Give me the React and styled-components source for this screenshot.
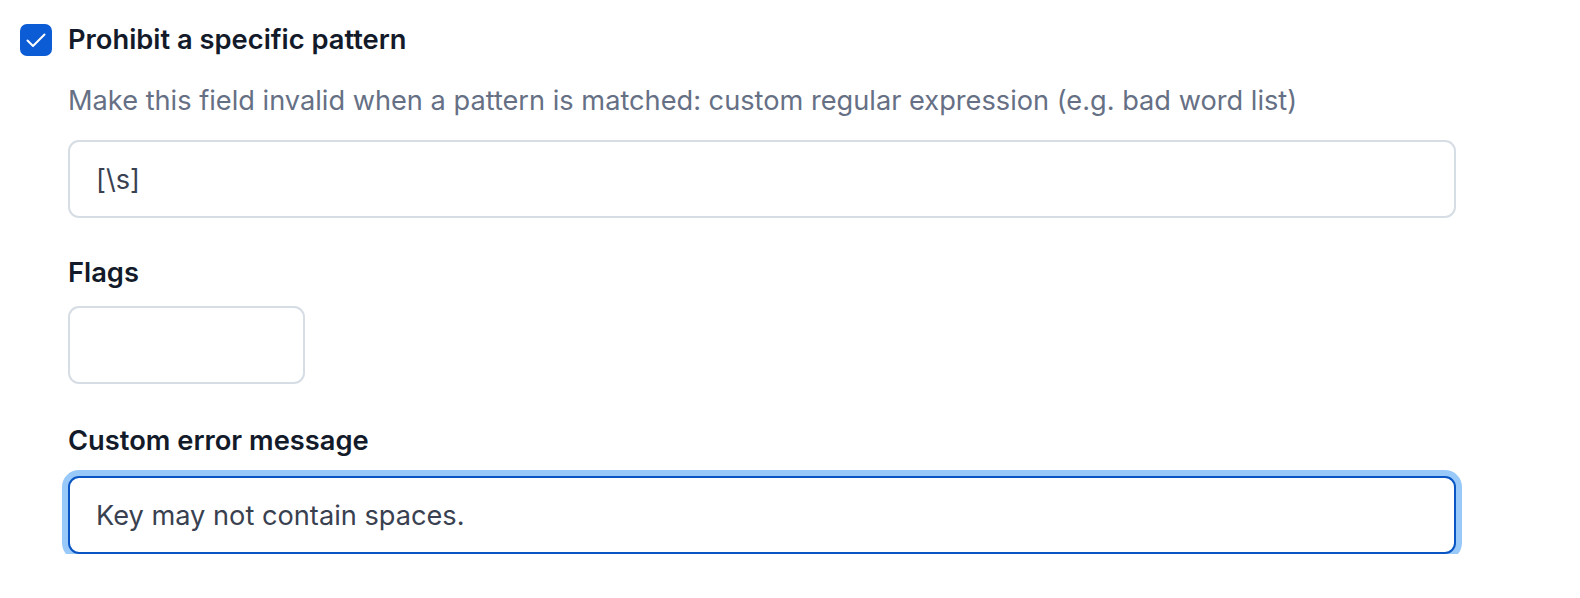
import React from "react";
import styled, { createGlobalStyle } from "styled-components";

const Global = createGlobalStyle`
  html, body { margin: 0; padding: 0; background: #ffffff; }
  body { font-family: Inter, "Noto Sans", sans-serif; }
`;

const Page = styled.div`
  padding: 24px 0 0 20px;
  width: 1436px;
`;

const CheckRow = styled.label`
  display: flex;
  align-items: center;
  gap: 16px;
  height: 32px;
`;

const Box = styled.span`
  width: 32px;
  height: 32px;
  border-radius: 7px;
  background: #0b5cd5;
  display: flex;
  align-items: center;
  justify-content: center;
  flex: none;
`;

const LabelText = styled.span`
  font-size: 27.3px;
  font-weight: 600;
  color: #131a29;
  line-height: 40px;
`;

const Body = styled.div`
  padding-left: 48px;
  display: flex;
  flex-direction: column;
`;

const Description = styled.p`
  margin: 25px 0 0;
  font-size: 27.2px;
  line-height: 40px;
  color: #667085;
  font-weight: 400;
`;

const FieldLabel = styled.div`
  margin-top: ${(p) => p.$mt}px;
  font-size: 27.3px;
  font-weight: 600;
  line-height: 40px;
  color: #131a29;
`;

const Input = styled.div`
  box-sizing: border-box;
  margin-top: ${(p) => p.$mt}px;
  width: ${(p) => p.$w || "1388px"};
  height: 78px;
  border: 2px solid ${(p) => (p.$focus ? "#0a55c4" : "#d6dde4")};
  border-radius: 11px;
  box-shadow: ${(p) => (p.$focus ? "0 0 0 6px #99c9f9" : "none")};
  background: #fff;
  display: flex;
  align-items: center;
  padding: 0 26px;
  font-size: 27.2px;
  color: #394150;
`;

function Check() {
  return (
    <svg width="32" height="32" viewBox="0 0 32 32" fill="none">
      <path d="M7.5 16.5L13 22L24.5 10.5" stroke="#fff" strokeWidth="2" strokeLinecap="round" strokeLinejoin="round" />
    </svg>
  );
}

export default function App() {
  return (
    <>
      <Global />
      <Page>
        <CheckRow>
          <Box><Check /></Box>
          <LabelText>Prohibit a specific pattern</LabelText>
        </CheckRow>
        <Body>
          <Description>
            Make this field invalid when a pattern is matched: custom regular expression (e.g. bad word list)
          </Description>
          <Input $mt={19}>[\s]</Input>
          <FieldLabel $mt={35}>Flags</FieldLabel>
          <Input $mt={13} $w="237px" />
          <FieldLabel $mt={37}>Custom error message</FieldLabel>
          <Input $mt={15} $focus>Key may not contain spaces.</Input>
        </Body>
      </Page>
    </>
  );
}
